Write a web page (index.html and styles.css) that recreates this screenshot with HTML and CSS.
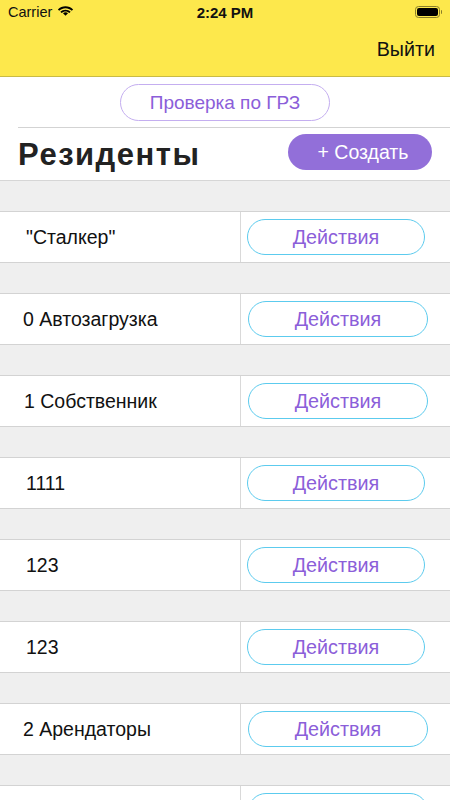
FILE: index.html
```html
<!DOCTYPE html>
<html lang="ru">
<head>
<meta charset="utf-8">
<link rel="stylesheet" href="styles.css">
</head>
<body>
<div class="topbar">
  <div class="status">
    <div class="status-left">
      <span>Carrier</span>
      <svg class="wifi" width="17" height="12" viewBox="0 0 17 12"><path d="M8.5 2.2c2.4 0 4.6.9 6.3 2.5l1.3-1.3C14.1 1.4 11.4.3 8.5.3S2.9 1.4.9 3.4l1.3 1.3C3.9 3.1 6.1 2.2 8.5 2.2z"/><path d="M8.5 5.6c1.5 0 2.8.6 3.9 1.5l1.3-1.3C12.3 4.5 10.5 3.7 8.5 3.7S4.7 4.5 3.3 5.8l1.3 1.3c1.1-.9 2.4-1.5 3.9-1.5z"/><path d="M6 7.2l2.5 2.6 2.5-2.6c-.7-.6-1.6-.9-2.5-.9S6.7 6.6 6 7.2z"/></svg>
    </div>
    <div class="status-time">2:24 PM</div>
    <div class="status-right">
      <span class="battery"><span class="battery-fill"></span></span><span class="battery-tip"></span>
    </div>
  </div>
  <div class="navbar">
    <span class="logout">Выйти</span>
  </div>
</div>

<div class="header">
  <div class="check-row">
    <button class="btn-outline-purple">Проверка по ГРЗ</button>
  </div>
  <div class="title-row">
    <h1 class="title">Резиденты</h1>
    <button class="btn-create">+ Создать</button>
  </div>
</div>

<div class="list">
  <div class="row"><div class="name n-wide">"Сталкер"</div><div class="action"><button class="btn-action">Действия</button></div></div>
  <div class="row"><div class="name">0 Автозагрузка</div><div class="action"><button class="btn-action wide">Действия</button></div></div>
  <div class="row"><div class="name n-mid">1 Собственник</div><div class="action"><button class="btn-action wide">Действия</button></div></div>
  <div class="row"><div class="name n-wide">1111</div><div class="action"><button class="btn-action">Действия</button></div></div>
  <div class="row"><div class="name n-wide">123</div><div class="action"><button class="btn-action">Действия</button></div></div>
  <div class="row"><div class="name n-wide">123</div><div class="action"><button class="btn-action">Действия</button></div></div>
  <div class="row"><div class="name">2 Арендаторы</div><div class="action"><button class="btn-action wide">Действия</button></div></div>
  <div class="row"><div class="name"></div><div class="action"><button class="btn-action wide"></button></div></div>
</div>
</body>
</html>
```

FILE: styles.css
```css
* { box-sizing: border-box; }
html, body { margin: 0; padding: 0; }
body {
  width: 450px;
  height: 800px;
  overflow: hidden;
  background: #efefef;
  font-family: "Liberation Sans", Arial, sans-serif;
  color: #111;
}
.topbar {
  background: #fde84c;
  border-bottom: 1px solid #c9bb45;
  height: 77px;
}
.status {
  height: 24px;
  display: flex;
  align-items: center;
  justify-content: space-between;
  padding: 0 8px 0 8px;
  position: relative;
  font-size: 14.5px;
}
.status-left { display: flex; align-items: center; gap: 5px; }
.wifi { fill: #000; }
.status-time {
  position: absolute;
  left: 0; right: 0;
  text-align: center;
  font-weight: bold;
  font-size: 15px;
  pointer-events: none;
}
.status-right { display: flex; align-items: center; }
.battery {
  width: 25px; height: 12px;
  border: 1px solid #8a7f2a;
  border-radius: 3.5px;
  padding: 1px;
  display: flex;
}
.battery-fill { flex: 1; background: #000; border-radius: 2px; }
.battery-tip {
  width: 1.5px; height: 4px; background: #8a7f2a; margin-left: 1px; border-radius: 0 1px 1px 0;
}
.navbar {
  height: 52px;
  display: flex;
  align-items: center;
  justify-content: flex-end;
  padding-right: 15px;
}
.logout { font-size: 19.7px; color: #111; margin-top: -1px; }

.header {
  background: #fff;
  border-bottom: 1px solid #d6d6d6;
  height: 104px;
}
.check-row {
  display: flex;
  justify-content: center;
  padding-top: 7px;
  height: 51px;
  margin-left: 18px;
  border-bottom: 1px solid #d3d3d3;
}
.btn-outline-purple {
  width: 210px;
  height: 37px;
  margin-left: -18px;
  border: 1px solid #c4aef0;
  border-radius: 19px;
  background: #fff;
  color: #8b5ed9;
  font-family: inherit;
  font-size: 19px;
  padding: 0;
}
.title-row {
  display: flex;
  align-items: center;
  justify-content: space-between;
  padding: 0 18px;
  height: 51px;
}
.title {
  margin: 0;
  font-size: 31px;
  letter-spacing: 1.5px;
  font-weight: bold;
  color: #222;
  margin-top: 2px;
}
.btn-create {
  width: 144px;
  height: 36px;
  border: none;
  border-radius: 18px;
  background: #926fd9;
  color: #fff;
  font-family: inherit;
  font-size: 19.5px;
  padding: 0 0 0 6px;
  margin-top: -3px;
}

.list {
  padding-top: 30px;
  display: flex;
  flex-direction: column;
  gap: 30px;
}
.row {
  display: flex;
  height: 52px;
  background: #fff;
  border-top: 1px solid #d3d3d3;
  border-bottom: 1px solid #d3d3d3;
  flex-shrink: 0;
}
.name {
  width: 241px;
  border-right: 1px solid #d9d9d9;
  display: flex;
  align-items: center;
  padding-left: 23px;
  font-size: 19.5px;
  color: #111;
}
.name.n-wide { padding-left: 26px; }
.name.n-mid { padding-left: 24px; }
.action {
  flex: 1;
  display: flex;
  align-items: center;
  padding-left: 6px;
}
.btn-action {
  width: 178px;
  height: 36px;
  border: 1px solid #5ccbee;
  border-radius: 18px;
  background: #fff;
  color: #8b5ed9;
  font-family: inherit;
  font-size: 19.8px;
  padding: 0;
}
.btn-action.wide { width: 180px; margin-left: 1px; }
```
